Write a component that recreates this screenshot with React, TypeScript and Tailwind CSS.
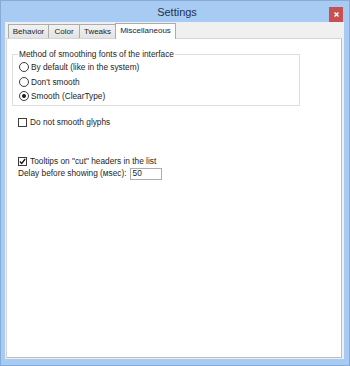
import React from 'react'

const font = { fontFamily: '"Liberation Sans", Arial, sans-serif' }

function Radio({ label, checked }: { label: string; checked?: boolean }) {
  return (
    <div className="flex items-center gap-[2px] h-[14.5px]">
      <span className="w-[10px] h-[10px] rounded-full border border-[#3c3c3c] bg-white flex items-center justify-center">
        {checked && <span className="w-[4px] h-[4px] rounded-full bg-[#1a1a1a]" />}
      </span>
      <span>{label}</span>
    </div>
  )
}

function Checkbox({ checked }: { checked?: boolean }) {
  return (
    <span className="w-[9px] h-[9px] border border-[#3c3c3c] bg-white flex items-center justify-center">
      {checked && (
        <svg width="7" height="7" viewBox="0 0 7 7">
          <path d="M0.8 3.6 L2.7 5.5 L6.2 1" fill="none" stroke="#1a1a1a" strokeWidth="1.4" />
        </svg>
      )}
    </span>
  )
}

export default function App() {
  const tabs = [
    { name: 'Behavior', w: 'w-[41px]' },
    { name: 'Color', w: 'w-[32px]' },
    { name: 'Tweaks', w: 'w-[37px]' },
  ]

  return (
    <div
      className="w-[350px] h-[366px] flex flex-col bg-[#a7cbf2] border border-[#86abd9] text-[#1e1e1e]"
      style={font}
    >
      {/* Title bar */}
      <div className="h-[21px] flex items-center shrink-0">
        <div className="w-[24px]" />
        <div className="flex-1 text-center text-[11px] text-[#24324a] pt-[1px]">Settings</div>
        <div className="w-[14px] h-[15px] mt-[6px] mr-[6px] self-start bg-[#c75050] flex items-center justify-center">
          <svg width="5" height="5" viewBox="0 0 5 5">
            <path d="M0.5 0.5 L4.5 4.5 M4.5 0.5 L0.5 4.5" stroke="white" strokeWidth="1.4" />
          </svg>
        </div>
      </div>

      {/* Client area */}
      <div className="flex-1 flex flex-col ml-[4px] mr-[5px] mb-[6px] bg-[#f0f0f0] pl-[1px] pr-[2px] pb-[1px] pt-[1px]">
        {/* Tabs */}
        <div className="flex items-end pl-[2px] h-[16px] -mb-px relative z-10 text-[8px]">
          {tabs.map((t, i) => (
            <div
              key={t.name}
              className={`${t.w} h-[14px] mb-px flex items-center justify-center border border-b-0 border-[#acacac] bg-gradient-to-b from-[#f2f2f2] to-[#e3e3e3] ${i > 0 ? '-ml-px' : ''}`}
            >
              {t.name}
            </div>
          ))}
          <div className="w-[61px] h-[16px] -ml-px flex items-center justify-center border border-b-0 border-[#acacac] bg-white pb-[2px]">
            Miscellaneous
          </div>
        </div>

        {/* Panel */}
        <div className="flex-1 bg-white border border-[#d5d5d5] border-r-[#bdbdbd] border-b-[#bdbdbd] pl-[5px] text-[8.3px]">
          <fieldset className="mt-[10px] w-[288px] border border-[#dcdcdc] pl-[6px] pb-[1px]">
            <legend className="-ml-[1px] px-[1px] leading-[10px]">Method of smoothing fonts of the interface</legend>
            <div className="pt-[1px]">
              <Radio label="By default (like in the system)" />
              <Radio label="Don't smooth" />
              <Radio label="Smooth (ClearType)" checked />
            </div>
          </fieldset>

          <div className="ml-[6px] mt-[10px] h-[14px] flex items-center gap-[3px]">
            <Checkbox />
            <span>Do not smooth glyphs</span>
          </div>

          <div className="ml-[6px] mt-[25px] h-[13px] flex items-center gap-[3px]">
            <Checkbox checked />
            <span>Tooltips on "cut" headers in the list</span>
          </div>

          <div className="ml-[6px] h-[12px] flex items-center gap-[3px]">
            <span>Delay before showing (мsec):</span>
            <div className="w-[32px] h-[12px] border border-[#abadb3] flex items-center pl-[2px] leading-none">50</div>
          </div>
        </div>
      </div>
    </div>
  )
}
